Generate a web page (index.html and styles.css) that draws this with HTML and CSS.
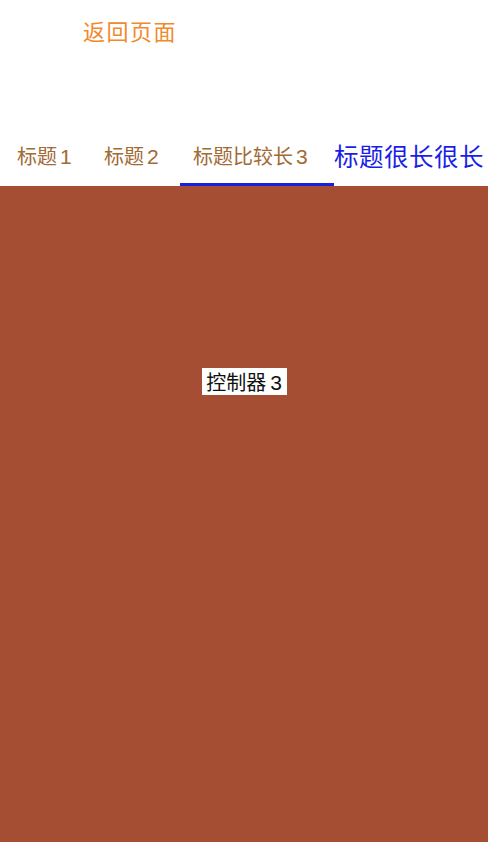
FILE: index.html
```html
<!DOCTYPE html>
<html lang="zh">
<head>
<meta charset="utf-8">
<link rel="stylesheet" href="styles.css">
</head>
<body>
<div class="screen">
  <header class="topbar">
    <span class="back">返回页面</span>
  </header>
  <nav class="tabs">
    <div class="tab t1"><span class="txt">标题<span class="num">1</span></span></div>
    <div class="tab t2"><span class="txt">标题<span class="num">2</span></span></div>
    <div class="tab t3 active"><span class="txt">标题比较长<span class="num">3</span></span></div>
    <div class="tab t4 big"><span class="txt">标题很长很长</span></div>
  </nav>
  <main class="content">
    <div class="label"><span class="txt">控制器<span class="num">3</span></span></div>
  </main>
</div>
</body>
</html>
```
FILE: styles.css
```css
html, body {
  margin: 0;
  padding: 0;
  background: #ffffff;
}
.screen {
  width: 488px;
  height: 861px;
  display: flex;
  flex-direction: column;
  font-family: "Noto Sans CJK SC", "Noto Sans", sans-serif;
}
.topbar {
  height: 60px;
  display: flex;
  align-items: center;
  padding-left: 83px;
  box-sizing: border-box;
}
.back {
  font-size: 22px;
  color: #f08a2c;
  letter-spacing: 1.5px;
}
.txt {
  white-space: nowrap;
}
.num {
  font-family: "Liberation Sans", "Noto Sans", sans-serif;
  font-size: 1.05em;
  margin-left: 3px;
}
.tabs {
  margin-top: 70px;
  height: 56px;
  display: flex;
  align-items: stretch;
  box-sizing: border-box;
}
.tab {
  display: flex;
  align-items: center;
  font-size: 20px;
  color: #a26a34;
  box-sizing: border-box;
  border-bottom: 3px solid transparent;
  padding-bottom: 3px;
}
.t1 { width: 87px; padding-left: 17px; }
.t2 { width: 93px; padding-left: 17px; }
.t3 { width: 154px; padding-left: 13px; }
.t4 { width: 154px; padding-left: 0; }
.active {
  border-bottom-color: #1a1ee0;
}
.big {
  font-size: 24.5px;
  color: #1a1ee6;
  letter-spacing: 0.5px;
}
.content {
  height: 656px;
  background: #a64e33;
  display: flex;
  justify-content: center;
  align-items: flex-start;
  padding-top: 182px;
  box-sizing: border-box;
}
.label {
  background: #ffffff;
  color: #111111;
  font-size: 20px;
  width: 85px;
  height: 27px;
  display: flex;
  align-items: center;
  justify-content: center;
}
.label .num {
  margin-left: 4px;
}
```
